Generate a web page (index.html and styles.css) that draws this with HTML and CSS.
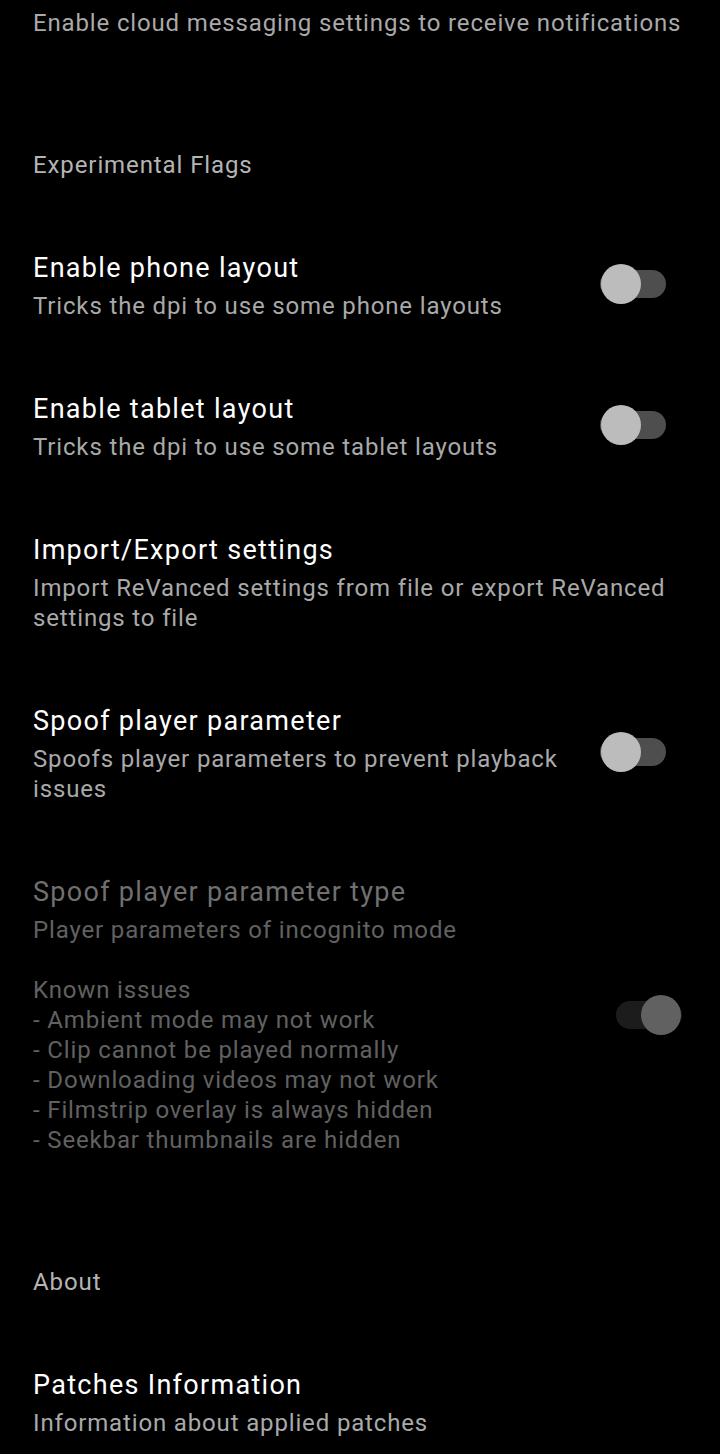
FILE: index.html
```html
<!DOCTYPE html>
<html lang="en">
  <head>
    <meta charset="UTF-8" />
    <meta name="viewport" content="width=device-width, initial-scale=1.0" />
    <title>ReVanced Settings</title>
    <link rel="stylesheet" href="styles.css">
  </head>
  <body>
    <div class="settings">
      <div class="pref pref--cut">
        <div class="pref__text">
          <div class="pref__summary">Enable cloud messaging settings to receive notifications</div>
        </div>
      </div>

      <div class="category">Experimental Flags</div>

      <div class="pref">
        <div class="pref__text">
          <div class="pref__title">Enable phone layout</div>
          <div class="pref__summary">Tricks the dpi to use some phone layouts</div>
        </div>
        <span class="switch"></span>
      </div>

      <div class="pref">
        <div class="pref__text">
          <div class="pref__title">Enable tablet layout</div>
          <div class="pref__summary">Tricks the dpi to use some tablet layouts</div>
        </div>
        <span class="switch"></span>
      </div>

      <div class="pref">
        <div class="pref__text">
          <div class="pref__title">Import/Export settings</div>
          <div class="pref__summary">Import ReVanced settings from file or export ReVanced settings to file</div>
        </div>
      </div>

      <div class="pref">
        <div class="pref__text">
          <div class="pref__title">Spoof player parameter</div>
          <div class="pref__summary">Spoofs player parameters to prevent playback issues</div>
        </div>
        <span class="switch"></span>
      </div>

      <div class="pref pref--disabled">
        <div class="pref__text">
          <div class="pref__title">Spoof player parameter type</div>
          <div class="pref__summary pref__summary--lines">Player parameters of incognito mode

Known issues
- Ambient mode may not work
- Clip cannot be played normally
- Downloading videos may not work
- Filmstrip overlay is always hidden
- Seekbar thumbnails are hidden</div>
        </div>
        <span class="switch switch--on"></span>
      </div>

      <div class="category">About</div>

      <div class="pref">
        <div class="pref__text">
          <div class="pref__title">Patches Information</div>
          <div class="pref__summary">Information about applied patches</div>
        </div>
      </div>
    </div>
  </body>
</html>
```

FILE: styles.css
```css
html,
body {
  margin: 0;
  background: #000;
}

body {
  font-family: Roboto, "Noto Sans", sans-serif;
  color: #fff;
  overflow: hidden;
}

.settings {
  display: flex;
  flex-direction: column;
}

.pref {
  display: flex;
  align-items: center;
  gap: 20px;
  padding: 35px 38px 35px 33px;
}

.pref--cut {
  padding-top: 8px;
}

.pref__text {
  flex: 1;
  min-width: 0;
}

.pref__title {
  font-size: 27px;
  line-height: 36px;
  letter-spacing: 1.3px;
  color: #fff;
}

.pref__summary {
  margin-top: 5px;
  font-size: 24px;
  line-height: 30px;
  letter-spacing: 0.85px;
  color: #a9a9a9;
}

.pref--cut .pref__summary {
  margin-top: 0;
}

.pref__summary--lines {
  white-space: pre-line;
}

.pref--disabled .pref__title {
  color: #707070;
}

.pref--disabled .pref__summary {
  color: #616161;
}

.category {
  padding: 77px 33px 35px;
  font-size: 24px;
  line-height: 30px;
  letter-spacing: 0.9px;
  color: #b4b4b4;
}

/* switch track + thumb */
.switch {
  position: relative;
  flex: none;
  width: 66px;
  height: 28px;
  margin-top: -3px;
  margin-right: 16px;
  border-radius: 14px;
  background: #4e4e4e;
}

.switch::after {
  content: "";
  position: absolute;
  top: -6px;
  left: 1px;
  width: 40px;
  height: 40px;
  border-radius: 50%;
  background: #bcbcbc;
}

.switch--on {
  margin-top: 0;
  margin-right: 0;
  background: #1c1c1c;
}

.switch--on::after {
  left: auto;
  right: 1px;
  background: #616161;
}
```
